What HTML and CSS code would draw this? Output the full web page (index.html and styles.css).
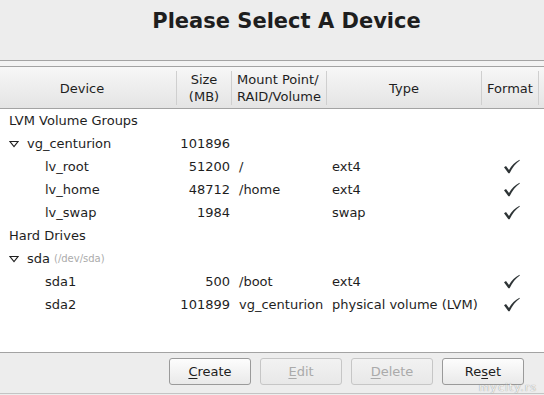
FILE: index.html
```html
<!DOCTYPE html>
<html lang="en">
<head>
    <meta charset="UTF-8">
    <title>Please Select A Device</title>
    <link rel="stylesheet" href="styles.css">
</head>
<body>
    <div class="window">
        <h1 class="title">Please Select A Device</h1>

        <div class="tree-frame">
            <div class="tree-header">
                <div class="hcell col-device">Device</div>
                <div class="hcell col-size">Size<br>(MB)</div>
                <div class="hcell col-mount">Mount Point/<br>RAID/Volume</div>
                <div class="hcell col-type">Type</div>
                <div class="hcell col-format">Format</div>
            </div>

            <div class="tree-body">
                <div class="row">
                    <div class="cell level-0">LVM Volume Groups</div>
                    <div class="cell"></div><div class="cell"></div><div class="cell"></div><div class="cell"></div>
                </div>
                <div class="row">
                    <div class="cell level-1"><span class="expander"></span>vg_centurion</div>
                    <div class="cell size">101896</div>
                    <div class="cell"></div><div class="cell"></div><div class="cell"></div>
                </div>
                <div class="row">
                    <div class="cell level-2">lv_root</div>
                    <div class="cell size">51200</div>
                    <div class="cell mount">/</div>
                    <div class="cell type">ext4</div>
                    <div class="cell format"><span class="check"></span></div>
                </div>
                <div class="row">
                    <div class="cell level-2">lv_home</div>
                    <div class="cell size">48712</div>
                    <div class="cell mount">/home</div>
                    <div class="cell type">ext4</div>
                    <div class="cell format"><span class="check"></span></div>
                </div>
                <div class="row">
                    <div class="cell level-2">lv_swap</div>
                    <div class="cell size">1984</div>
                    <div class="cell mount"></div>
                    <div class="cell type">swap</div>
                    <div class="cell format"><span class="check"></span></div>
                </div>
                <div class="row">
                    <div class="cell level-0">Hard Drives</div>
                    <div class="cell"></div><div class="cell"></div><div class="cell"></div><div class="cell"></div>
                </div>
                <div class="row">
                    <div class="cell level-1"><span class="expander"></span>sda <span class="dev-path">(/dev/sda)</span></div>
                    <div class="cell"></div><div class="cell"></div><div class="cell"></div><div class="cell"></div>
                </div>
                <div class="row">
                    <div class="cell level-2">sda1</div>
                    <div class="cell size">500</div>
                    <div class="cell mount">/boot</div>
                    <div class="cell type">ext4</div>
                    <div class="cell format"><span class="check"></span></div>
                </div>
                <div class="row">
                    <div class="cell level-2">sda2</div>
                    <div class="cell size">101899</div>
                    <div class="cell mount">vg_centurion</div>
                    <div class="cell type">physical volume (LVM)</div>
                    <div class="cell format"><span class="check"></span></div>
                </div>
            </div>
        </div>

        <div class="button-bar">
            <button class="btn"><u>C</u>reate</button>
            <button class="btn" disabled><u>E</u>dit</button>
            <button class="btn" disabled><u>D</u>elete</button>
            <button class="btn">Re<u>s</u>et</button>
        </div>

        <span class="watermark">mycity.rs</span>
    </div>
</body>
</html>
```

FILE: styles.css
```css
:root {
    --window-bg: #ededed;
    --text-color: #1e1e1e;
    --border-dark: #a3a3a3;
    --separator: #cfcfcf;
    --font-family: 'DejaVu Sans', 'Liberation Sans', sans-serif;
}

body {
    margin: 0;
    padding: 0;
    font-family: var(--font-family);
    font-size: 13px;
    color: var(--text-color);
    background-color: var(--window-bg);
}

.window {
    position: relative;
    width: 544px;
    height: 395px;
    overflow: hidden;
    display: flex;
    flex-direction: column;
}

.title {
    margin: 0;
    height: 51px;
    padding-top: 9px;
    font-size: 21px;
    line-height: 25px;
    font-weight: bold;
    text-align: center;
    padding-left: 29px;
}

.tree-frame {
    border-top: 1px solid var(--border-dark);
    padding-top: 5px;
    background-color: #f3f3f3;
    height: 286px;
    display: flex;
    flex-direction: column;
}

.tree-header,
.row {
    display: grid;
    grid-template-columns: 177px 55px 95px 155px 57px 5px;
}

.tree-header {
    height: 41px;
    border-top: 1px solid var(--border-dark);
    border-bottom: 1px solid var(--border-dark);
    background: linear-gradient(to bottom, #f7f7f7, #e4e4e4);
}

.hcell {
    display: flex;
    align-items: center;
    justify-content: center;
    text-align: center;
    line-height: 17px;
    border-right: 1px solid var(--separator);
    margin: 4px 0;
}

.col-device {
    padding-right: 12px;
}

.col-mount {
    justify-content: flex-start;
    text-align: left;
    padding-left: 5px;
}

.tree-body {
    flex: 1;
    background-color: #fff;
}

.row {
    height: 23px;
    line-height: 23px;
}

.cell {
    white-space: nowrap;
    display: flex;
    align-items: center;
}

.level-0 {
    padding-left: 9px;
}

.level-1 {
    padding-left: 9px;
}

.level-2 {
    padding-left: 45px;
}

.expander {
    width: 10px;
    height: 8px;
    margin-right: 8px;
    background: url("data:image/svg+xml,%3Csvg xmlns='http://www.w3.org/2000/svg' width='10' height='8'%3E%3Cpath d='M1 1.5 H9 L5 6.5 Z' fill='none' stroke='%23202020' stroke-width='1.1'/%3E%3C/svg%3E") no-repeat;
}

.dev-path {
    font-size: 10px;
    color: #ababab;
    margin-left: 4px;
}

.size {
    justify-content: flex-end;
    padding-right: 2px;
}

.mount {
    padding-left: 7px;
}

.type {
    padding-left: 5px;
}

.format {
    justify-content: center;
    padding-left: 2px;
}

.check {
    width: 17px;
    height: 15px;
    background: url("data:image/svg+xml,%3Csvg xmlns='http://www.w3.org/2000/svg' width='17' height='15'%3E%3Cpath d='M1 8.2 L3 7 L6 11 C8.5 6.5 12 3 16.5 0.8 L16.8 1.4 C12.5 4.2 9.5 8.5 6.6 14.3 L5.4 14.3 Z' fill='%232e3436'/%3E%3C/svg%3E") no-repeat;
}

.button-bar {
    border-top: 1px solid var(--border-dark);
    border-bottom: 1px solid #c4c4c4;
    box-sizing: border-box;
    height: 42px;
    display: flex;
    justify-content: flex-end;
    align-items: flex-start;
    gap: 9px;
    padding: 5px 20px 0 0;
}

.btn {
    width: 82px;
    height: 27px;
    font-family: var(--font-family);
    font-size: 13px;
    color: var(--text-color);
    border: 1px solid #9a9a9a;
    border-radius: 3px;
    background: linear-gradient(to bottom, #fdfdfd, #e9e9e9);
    padding: 0;
}

.btn:disabled {
    color: #aaaaaa;
    border-color: #c6c6c6;
    background: linear-gradient(to bottom, #f2f2f2, #e8e8e8);
}

.btn u {
    text-underline-offset: 2px;
}

.watermark {
    position: absolute;
    right: 7px;
    bottom: 1px;
    font-size: 11px;
    line-height: 12px;
    letter-spacing: 1px;
    color: #f2f2f2;
    text-shadow: 0 0 1px #7a7a7a;
}
```
